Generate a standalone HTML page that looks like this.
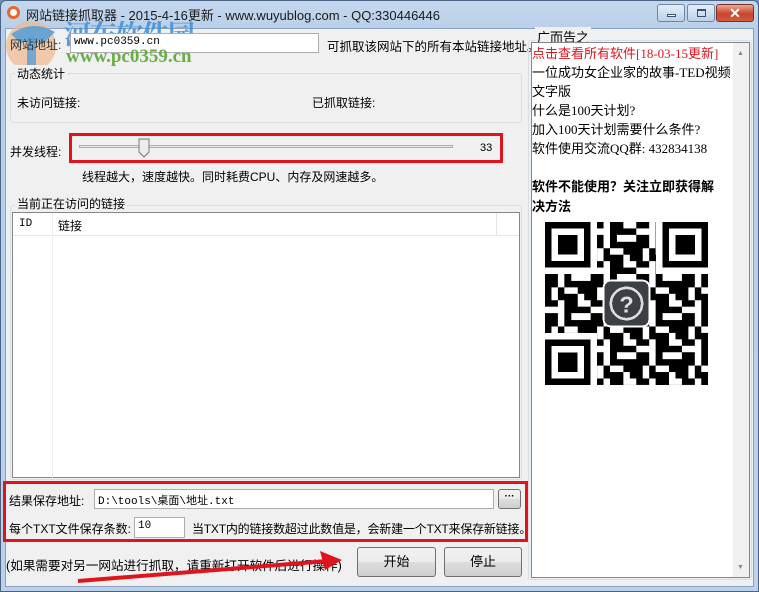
<!DOCTYPE html>
<html><head><meta charset="utf-8">
<style>
*{margin:0;padding:0;box-sizing:border-box}
body{width:759px;height:592px;overflow:hidden;background:#6e90b8;font-family:"Liberation Sans","Noto Sans CJK SC",sans-serif;font-size:12px;color:#000;position:relative}
.a{position:absolute}
.win{left:0;top:0;width:759px;height:592px;background:linear-gradient(#c4d7ee,#b9cfe9 30px,#bcd1ea);border:1px solid #4a6484;border-radius:6px 6px 0 0}
.client{left:5px;top:28px;width:749px;height:559px;background:#f0f0f0;border:1px solid #8aa0bc}
.inp{background:#fff;border:1px solid #abadb3;font-family:"Liberation Mono","Noto Sans CJK SC",monospace;font-size:11px;padding:2px 3px}
.grp{border:1px solid #d5dfe5;border-radius:3px}
.lbl{background:#f0f0f0;padding:0 2px}
.btn{border:1px solid #707070;border-radius:3px;background:linear-gradient(#f2f2f2,#ebebeb 50%,#dddddd 51%,#cfcfcf);text-align:center;font-size:13px}
.red{border:3px solid #e0141e}
</style></head><body>
<div class="a win"></div>
<div class="a" style="left:7px;top:6px;width:13px;height:13px;border-radius:50%;border:3px solid #e8682a;background:#fff"></div>
<div class="a" style="left:26px;top:5px;font-size:13px;color:#1a1a1a">网站链接抓取器 - 2015-4-16更新 - www.wuyublog.com - QQ:330446446</div>
<div class="a" style="left:657px;top:4px;width:28px;height:18px;border:1px solid #6e85a6;border-radius:3px;background:linear-gradient(#e4eefa,#bcd0ea)"><div class="a" style="left:9px;top:9px;width:9px;height:3px;background:#fff;border:1px solid #3a4e6a"></div></div>
<div class="a" style="left:687px;top:4px;width:28px;height:18px;border:1px solid #6e85a6;border-radius:3px;background:linear-gradient(#e4eefa,#bcd0ea)"><div class="a" style="left:9px;top:4px;width:9px;height:8px;border:1px solid #3a4e6a;border-top-width:2px"></div></div>
<div class="a" style="left:716px;top:4px;width:38px;height:18px;border:1px solid #7a3020;border-radius:3px;background:linear-gradient(#e9a896,#c9462c 55%,#d25a3c);color:#fff;font-weight:bold;font-size:14px;text-align:center;line-height:16px">✕</div>
<div class="a client"></div>

<svg class="a" style="left:3px;top:14px" width="60" height="62" viewBox="0 0 60 62"><circle cx="28" cy="32" r="25" fill="#f0b890" opacity=".7"/><path d="M8 20 Q30 5 52 18 L40 30 Q30 22 18 30Z" fill="#4a9bd8" opacity=".8"/><rect x="24" y="24" width="9" height="30" fill="#4a9bd8" opacity=".75"/></svg>
<div class="a" style="left:64px;top:13px;font-size:27px;font-weight:bold;color:#3d8fd8;opacity:.85;font-family:'Noto Serif CJK SC',serif;letter-spacing:-1px">河东软件园</div>

<div class="a" style="left:10px;top:36px;color:#333">网站地址:</div>
<div class="a inp" style="left:70px;top:33px;width:249px;height:20px">www.pc0359.cn</div>
<div class="a" style="left:327px;top:36px;font-size:12.5px">可抓取该网站下的所有本站链接地址。</div>
<div class="a" style="left:66px;top:46px;font-size:19px;font-weight:bold;color:#5aa832;font-family:'Liberation Serif',serif;opacity:.9">www.pc0359.cn</div>

<div class="a grp" style="left:10px;top:73px;width:512px;height:50px"></div>
<div class="a lbl" style="left:15px;top:65px">动态统计</div>
<div class="a" style="left:17px;top:94px">未访问链接:</div>
<div class="a" style="left:312px;top:94px">已抓取链接:</div>

<div class="a" style="left:10px;top:143px">并发线程:</div>
<div class="a red" style="left:69px;top:133px;width:434px;height:30px"></div>
<div class="a" style="left:79px;top:145px;width:374px;height:3px;border:1px solid #b0b0b0;background:#e7e7e7"></div>
<svg class="a" style="left:138px;top:138px" width="12" height="20"><path d="M1 1H11V14L6 19L1 14Z" fill="#ececec" stroke="#7a7a7a"/></svg>
<div class="a" style="left:480px;top:142px;font-size:11px">33</div>
<div class="a" style="left:82px;top:168px">线程越大，速度越快。同时耗费CPU、内存及网速越多。</div>

<div class="a grp" style="left:10px;top:205px;width:512px;height:275px"></div>
<div class="a lbl" style="left:15px;top:195px">当前正在访问的链接</div>
<div class="a" style="left:12px;top:212px;width:508px;height:266px;background:#fff;border:1px solid #828790"></div>
<div class="a" style="left:13px;top:213px;width:506px;height:23px;border-bottom:1px solid #e5e5e5;background:#fff"></div>
<div class="a" style="left:52px;top:213px;width:1px;height:265px;background:#f0f0f0"></div>
<div class="a" style="left:496px;top:213px;width:1px;height:23px;background:#e5e5e5"></div>
<div class="a" style="left:19px;top:218px;font-family:'Liberation Mono',monospace;font-size:11px">ID</div>
<div class="a" style="left:58px;top:217px">链接</div>

<div class="a red" style="left:3px;top:481px;width:525px;height:61px"></div>
<div class="a" style="left:9px;top:492px">结果保存地址:</div>
<div class="a inp" style="left:94px;top:489px;width:400px;height:20px">D:\tools\桌面\地址.txt</div>
<div class="a btn" style="left:498px;top:489px;width:23px;height:20px;font-size:10px;line-height:14px;font-weight:bold">···</div>
<div class="a" style="left:9px;top:520px">每个TXT文件保存条数:</div>
<div class="a inp" style="left:134px;top:517px;width:51px;height:21px">10</div>
<div class="a" style="left:192px;top:520px;letter-spacing:-.2px">当TXT内的链接数超过此数值是，会新建一个TXT来保存新链接。</div>

<div class="a" style="left:6px;top:555px;font-size:12.6px">(如果需要对另一网站进行抓取，请重新打开软件后进行操作)</div>
<svg class="a" style="left:70px;top:548px" width="290" height="40"><path d="M8 33 L258 13" stroke="#e0141e" stroke-width="4"/><path d="M272 12 L250 3 L255 22Z" fill="#e0141e"/></svg>
<div class="a btn" style="left:357px;top:547px;width:79px;height:30px;line-height:28px">开始</div>
<div class="a btn" style="left:444px;top:547px;width:78px;height:30px;line-height:28px">停止</div>

<div class="a grp" style="left:528px;top:40px;width:224px;height:540px"></div>
<div class="a lbl" style="left:535px;top:27px;font-size:13px">广而告之</div>
<div class="a" style="left:531px;top:42px;width:219px;height:536px;background:#fff;border:1px solid #828790"></div>
<div class="a" style="left:733px;top:43px;width:16px;height:534px;background:#f0f0f0"></div>
<div class="a" style="left:737px;top:50px;font-size:7px;color:#888">▲</div>
<div class="a" style="left:737px;top:564px;font-size:7px;color:#888">▼</div>
<div class="a" style="left:532px;top:44px;width:188px;font-size:13px;line-height:19px;font-family:'Liberation Serif','Noto Sans CJK SC',serif">
<div style="color:#e0141e;white-space:nowrap">点击查看所有软件[18-03-15更新]</div>
<div style="white-space:nowrap">一位成功女企业家的故事-TED视频</div>
<div>文字版</div>
<div>什么是100天计划?</div>
<div>加入100天计划需要什么条件?</div>
<div>软件使用交流QQ群: 432834138</div>
<div style="height:19px"></div>
<div style="font-weight:bold;line-height:20px">软件不能使用？关注立即获得解决方法</div>
</div>
<svg class="a" style="left:545px;top:222px" width="163" height="163" viewBox="0 0 25 25" shape-rendering="crispEdges">
<defs><pattern id="p" width="7" height="6" patternUnits="userSpaceOnUse">
<rect x="0" y="0" width="2" height="1"/><rect x="3" y="0" width="2" height="2"/><rect x="5" y="1" width="2" height="1"/><rect x="0" y="2" width="2" height="2"/><rect x="4" y="3" width="2" height="1"/><rect x="0" y="4" width="1" height="2"/><rect x="2" y="5" width="3" height="1"/><rect x="6" y="3" width="1" height="3"/><rect x="3" y="2" width="1" height="2"/><rect x="2" y="4" width="1" height="1"/><rect x="5" y="4" width="1" height="1"/>
</pattern></defs>
<rect width="25" height="25" fill="#fff"/>
<rect x="0" y="0" width="25" height="25" fill="url(#p)"/>
<g fill="#fff"><rect x="0" y="0" width="8" height="8"/><rect x="17" y="0" width="8" height="8"/><rect x="0" y="17" width="8" height="8"/></g>
<g fill="none" stroke="#000"><rect x=".5" y=".5" width="6" height="6"/><rect x="18.5" y=".5" width="6" height="6"/><rect x=".5" y="18.5" width="6" height="6"/></g>
<rect x="2" y="2" width="3" height="3"/><rect x="20" y="2" width="3" height="3"/><rect x="2" y="20" width="3" height="3"/>
<rect x="9" y="9" width="7" height="7" rx="1" fill="#3c4046" stroke="#fff" stroke-width=".3"/>
<circle cx="12.5" cy="12.5" r="2.4" fill="none" stroke="#ddd" stroke-width=".4"/>
<text x="12.5" y="13.9" font-size="3.6" text-anchor="middle" fill="#ddd" font-family="Liberation Sans" font-weight="bold">?</text>
</svg>
</body></html>
